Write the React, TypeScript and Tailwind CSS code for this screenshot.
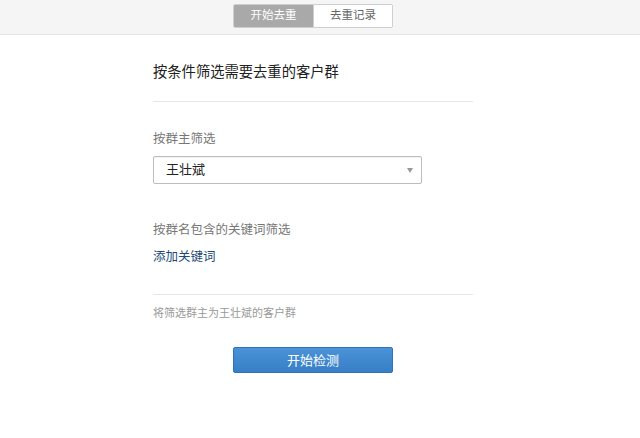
export default function App() {
  return (
    <div className="min-h-[438px] bg-white text-[#333]" style={{ fontFamily: '"Liberation Sans", "Noto Sans CJK SC", sans-serif' }}>
      {/* Top tabs */}
      <header className="h-[35px] bg-[#f5f5f5] border-b border-[#e4e4e4] pr-[14px] pt-[4px] flex justify-center">
        <div className="flex h-[24px] border border-[#cfcfcf] rounded-[2px] overflow-hidden">
          <button className="w-[79px] bg-[#a9a9a9] text-white text-[11.5px] leading-none">开始去重</button>
          <button className="w-[79px] bg-white text-[#666] text-[11.5px] leading-none border-l border-[#cfcfcf]">去重记录</button>
        </div>
      </header>

      <main className="pr-[14px] flex justify-center">
        <div className="w-[320px] pt-[27px]">
          <div className="pb-[19px] border-b border-[#e6e6e6] text-[14.3px] leading-[20px] text-[#222]">
            按条件筛选需要去重的客户群
          </div>

          <div className="mt-[28px] text-[12.5px] leading-[18px] text-[#777]">按群主筛选</div>
          <div className="mt-[8px] w-[269px] h-[28px] border border-[#bdbdbd] rounded-[2px] shadow-[inset_0_1px_1px_rgba(0,0,0,0.06)] flex items-center justify-between pl-[12px] pr-[8px]">
            <span className="text-[13px] text-[#222]">王壮斌</span>
            <span className="w-0 h-0 border-l-[3px] border-r-[3px] border-t-[5px] border-l-transparent border-r-transparent border-t-[#999]" />
          </div>

          <div className="mt-[37px] text-[12.5px] leading-[18px] text-[#777]">按群名包含的关键词筛选</div>
          <div className="mt-[9px] text-[12.5px] leading-[18px] text-[#1c4a7a] cursor-pointer">添加关键词</div>

          <div className="mt-[28px] border-t border-[#e6e6e6]" />
          <div className="mt-[10px] text-[11px] leading-[16px] text-[#999]">将筛选群主为王壮斌的客户群</div>

          <div className="mt-[26px] flex justify-center">
            <button className="w-[160px] h-[26px] rounded-[2px] border border-[#3271b5] bg-gradient-to-b from-[#4a93d8] to-[#377fc6] text-white text-[13px] leading-none">
              开始检测
            </button>
          </div>
        </div>
      </main>
    </div>
  )
}
